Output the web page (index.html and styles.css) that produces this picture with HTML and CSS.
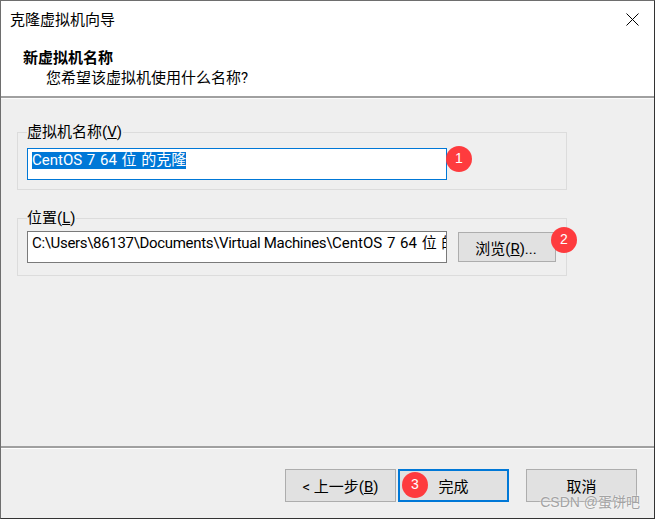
FILE: index.html
```html
<!DOCTYPE html>
<html lang="zh-CN">
<head>
<meta charset="utf-8">
<title>克隆虚拟机向导</title>
<link rel="stylesheet" href="styles.css">
</head>
<body>
<div class="window">
  <header class="head">
    <div class="titlebar">
      <span class="title">克隆虚拟机向导</span>
      <svg class="close" width="13" height="13" viewBox="0 0 13 13"><path d="M0.5 0.5L12.5 12.5M12.5 0.5L0.5 12.5" stroke="#000" stroke-width="1" fill="none"/></svg>
    </div>
    <div class="heading">新虚拟机名称</div>
    <div class="subheading">您希望该虚拟机使用什么名称?</div>
  </header>
  <main class="body">
    <section class="group group-name">
      <span class="legend">虚拟机名称(<u>V</u>)</span>
      <div class="field field-active"><span class="selected">CentOS 7 64 位 的克隆</span></div>
      <span class="badge badge-1">1</span>
    </section>
    <section class="group group-path">
      <span class="legend">位置(<u>L</u>)</span>
      <div class="field"><span class="clip"><span class="path-prefix">C:\Users\86137\Documents\Virtual Machines\</span><span class="path-name">CentOS 7 64 位 的克隆</span></span></div>
      <button class="btn btn-browse">浏览(<u>R</u>)...</button>
      <span class="badge badge-2">2</span>
    </section>
  </main>
  <footer class="foot">
    <button class="btn btn-wide">&lt; 上一步(<u>B</u>)</button>
    <button class="btn btn-wide btn-default">完成<span class="badge badge-3">3</span></button>
    <button class="btn btn-wide btn-cancel">取消</button>
    <span class="watermark">CSDN @蛋饼吧</span>
  </footer>
</div>
</body>
</html>
```
FILE: styles.css
```css
* { box-sizing: border-box; }
html, body { margin: 0; padding: 0; }
body {
  width: 655px;
  height: 519px;
  overflow: hidden;
  font-family: Roboto, "Noto Sans CJK SC", sans-serif;
  font-size: 15px;
  color: #000;
}
.window {
  width: 655px;
  height: 519px;
  display: flex;
  flex-direction: column;
  background: #efefef;
  border-top: 1px solid #6e6e6e;
  border-left: 1px solid #6e6e6e;
  border-right: 1px solid #333;
  border-bottom: 1px solid #333;
}
.head {
  height: 97px;
  flex: none;
  background: #fff;
  border-bottom: 2px solid #a0a0a0;
  padding-left: 9px;
}
.titlebar {
  height: 38px;
  display: flex;
  align-items: flex-start;
  justify-content: space-between;
  padding: 9px 15px 0 0;
}
.title { line-height: 20px; }
.close { margin-top: 3px; }
.heading {
  margin-left: 13px;
  line-height: 20px;
  font-weight: 700;
  margin-top: 9px;
}
.subheading {
  margin-left: 36px;
  line-height: 20px;
}
.body {
  flex: 1;
  border-bottom: 2px solid #a0a0a0;
  padding: 34px 87px 0 16px;
  display: flex;
  flex-direction: column;
  gap: 28px;
  box-shadow: inset 0 1px 0 #fbfbfb;
}
.group {
  position: relative;
  height: 58px;
  border: 1px solid #dcdcdc;
  padding: 15px 0 0 9px;
  display: flex;
  align-items: flex-start;
}
.group-path { padding-top: 12px; }
.legend {
  position: absolute;
  left: 9px;
  top: -11px;
  padding: 0 1px 0 0;
  line-height: 20px;
  background: #efefef;
}
.field {
  width: 420px;
  height: 32px;
  background: #fff;
  border: 1px solid #7a7a7a;
  padding: 0 0 0 4px;
  line-height: 22px;
  white-space: nowrap;
  overflow: hidden;
}
.field-active { border-color: #0078d7; padding-top: 2px; }
.selected {
  display: inline-block;
  background: #0078d7;
  color: #fff;
  height: 17px;
  line-height: 17px;
  vertical-align: top;
  margin-top: 1px;
  word-spacing: 1px;
}
.clip { display: block; width: 414px; overflow: hidden; }
.path-prefix { letter-spacing: -0.32px; }
.path-name { word-spacing: 1px; }
.btn {
  font: inherit;
  color: #000;
  background: #e1e1e1;
  border: 1px solid #adadad;
  padding: 0;
  border-radius: 0;
}
.btn-browse {
  width: 98px;
  height: 30px;
  margin: 1px 0 0 11px;
  padding-right: 2px;
}
.badge {
  position: absolute;
  width: 26px;
  height: 26px;
  border-radius: 50%;
  background: #fe3b3e;
  color: #fff;
  font-family: "Liberation Sans", sans-serif;
  font-size: 14px;
  line-height: 24px;
  text-align: center;
}
.badge-1 { left: 428px; top: 13px; }
.badge-2 { left: 533px; top: 8px; }
.badge-3 { left: 2px; top: 1px; }
.foot {
  height: 70px;
  flex: none;
  position: relative;
  display: flex;
  padding: 21px 17px 0 284px;
  box-shadow: inset 0 1px 0 #fff;
}
.btn-wide { width: 111px; height: 33px; position: relative; }
.btn-default {
  margin-left: 2px;
  border: 2px solid #0078d7;
}
.btn-cancel { margin-left: 17px; }
.watermark {
  position: absolute;
  right: 14px;
  bottom: 7px;
  font-family: "Liberation Sans", "Noto Sans CJK SC", sans-serif;
  font-size: 14px;
  line-height: 18px;
  color: #a3a3a3;
  text-shadow: 0 0 2px #fff;
}
```
